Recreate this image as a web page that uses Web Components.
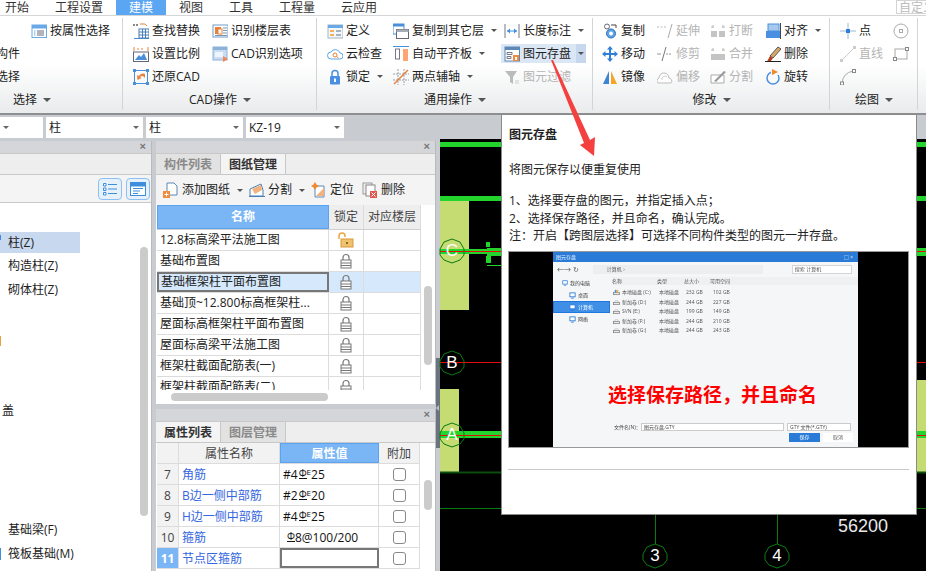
<!DOCTYPE html>
<html lang="zh-CN">
<head>
<meta charset="utf-8">
<title>图元存盘</title>
<style>
    html, body { margin: 0; padding: 0; background: #c8cbcf; }
    body {
        width: 926px; height: 571px; overflow: hidden;
        font: 12px/16px "Open Sans", "Noto Sans CJK SC", sans-serif; color: #222;
    }
</style>
</head>
<body>
<gl-app>
    <gl-tabs slot="top"></gl-tabs>
    <gl-ribbon slot="top">
        <rb-group label="选择" width="182" pad="55" cols="35px 85px">
            <rb-item></rb-item>
            <rb-item>构件</rb-item>
            <rb-item>选择</rb-item>
            <rb-item icon="attr">按属性选择</rb-item>
        </rb-group>
        <rb-group label="CAD操作" width="194" pad="10" cols="79px 100px">
            <rb-item icon="find">查找替换</rb-item>
            <rb-item icon="scale">设置比例</rb-item>
            <rb-item icon="restore">还原CAD</rb-item>
            <rb-item icon="floor">识别楼层表</rb-item>
            <rb-item icon="cadopt">CAD识别选项</rb-item>
        </rb-group>
        <rb-group label="通用操作" width="276" pad="10" cols="66px 111px 90px">
            <rb-item icon="define">定义</rb-item>
            <rb-item icon="cloud">云检查</rb-item>
            <rb-item icon="padlock" caret>锁定</rb-item>
            <rb-item icon="copyfloor" caret>复制到其它层</rb-item>
            <rb-item icon="align" caret>自动平齐板</rb-item>
            <rb-item icon="axis" caret>两点辅轴</rb-item>
            <rb-item icon="dim" caret>长度标注</rb-item>
            <rb-item icon="save" caret hot>图元存盘</rb-item>
            <rb-item icon="filter" disabled>图元过滤</rb-item>
        </rb-group>
        <rb-group label="修改" width="237" pad="9" cols="55px 53px 55px 60px">
            <rb-item icon="copy">复制</rb-item>
            <rb-item icon="move">移动</rb-item>
            <rb-item icon="mirror">镜像</rb-item>
            <rb-item icon="extend" disabled>延伸</rb-item>
            <rb-item icon="trim" disabled>修剪</rb-item>
            <rb-item icon="offset" disabled>偏移</rb-item>
            <rb-item icon="breakit" disabled>打断</rb-item>
            <rb-item icon="merge" disabled>合并</rb-item>
            <rb-item icon="split" disabled>分割</rb-item>
            <rb-item icon="snap" caret>对齐</rb-item>
            <rb-item icon="erase">删除</rb-item>
            <rb-item icon="rotate">旋转</rb-item>
        </rb-group>
        <rb-group label="绘图" width="88" pad="10" cols="53px 24px">
            <rb-item icon="point">点</rb-item>
            <rb-item icon="line" disabled>直线</rb-item>
            <rb-item icon="arc"></rb-item>
            <rb-item icon="circle"></rb-item>
            <rb-item icon="rect"></rb-item>
        </rb-group>
    </gl-ribbon>
    <gl-selectors slot="top"></gl-selectors>

    <gl-panel slot="left">
        <tree-tools slot="tools"></tree-tools>
        <tree-list></tree-list>
    </gl-panel>

    <gl-panel slot="mid-top" tabs="构件列表|图纸管理" active="1">
        <sheet-tools slot="tools"></sheet-tools>
        <sheet-table></sheet-table>
    </gl-panel>
    <gl-panel slot="mid-bottom" tabs="属性列表|图层管理" active="0">
        <prop-table></prop-table>
    </gl-panel>

    <cad-canvas slot="canvas"></cad-canvas>

    <tip-card slot="over" title="图元存盘">
        <file-dialog slot="shot"></file-dialog>
    </tip-card>
</gl-app>

<script>
const svgIcons = {
    attr: '<rect x="1" y="2" width="14.5" height="12.5" fill="#fff" stroke="#69a9e8"/><rect x="1" y="2" width="14.5" height="3.5" fill="#69a9e8"/><path d="M6 8h7M6 10h7M6 12h7" stroke="#667"/><path d="M3 8h1.5M3 10h1.5M3 12h1.5" stroke="#69a9e8"/>',
    find: '<path d="M0 2h2M3 2h2" stroke="#888" stroke-width="2"/><path d="M7 1h5l2 2" fill="none" stroke="#e8813a"/><path d="M1 15.500h15" stroke="#4a90d9"/><rect x="6" y="6" width="10" height="9" fill="#fff" stroke="#4a7fb5"/><path d="M6 9h10M6 12h10M9.500 6v9M12.500 6v9" stroke="#4a7fb5"/>',
    scale: '<path d="M1 1v4M15 1v4" stroke="#e8813a"/><path d="M4 3h8" stroke="#e8813a" stroke-dasharray="2 2"/><rect x=".5" y="6" width="15" height="9.500" fill="#fff" stroke="#667"/><path d="M2 14l4-5 2 2 3-4 3 7z" fill="#4a90d9"/>',
    restore: '<rect x="1.500" y="1.500" width="13" height="13" fill="none" stroke="#4a90d9"/><path d="M0 0h3v3H0zM13 0h3v3h-3zM0 13h3v3H0zM13 13h3v3h-3z" fill="#4a90d9"/><path d="M12 5a4.500 4.500 0 0 0-6 2l-2-1 .5 5 4-2-1.500-1a3 3 0 0 1 5 3" fill="#e8813a"/>',
    floor: '<rect x="1" y="2" width="15" height="12" fill="#fff" stroke="#6e9cc9"/><rect x="3" y="4" width="6" height="7" fill="#e8813a"/><rect x="6" y="6" width="4" height="5" fill="#fff" stroke="#e8813a"/><path d="M11 5h4M11 7.500h4M11 10h4M3 12.500h12" stroke="#7a94b0"/>',
    cadopt: '<rect x="1" y="1" width="14" height="13" fill="#c9dcf2" stroke="#8cb2dc"/><rect x="1" y="1" width="14" height="3" fill="#8cb2dc"/><path d="M11 10l5 3-5 3z" fill="#ee8850"/><rect x="3" y="6" width="8" height="5" fill="#eef5fc"/>',
    define: '<rect x="1" y="2" width="15" height="13" fill="#f5f8fb" stroke="#a5b2bf"/><rect x="1" y="2" width="15" height="3" fill="#69a9e8"/><path d="M3 7h4v2H3zM3 11h4v2H3z" fill="#f0b15a"/><path d="M9 8h5M9 12h5" stroke="#a5b2bf" stroke-width="2"/>',
    cloud: '<path d="M4 13a3.500 3.500 0 0 1 0-7 5 5 0 0 1 9 1 3 3 0 0 1 0 6z" fill="#fff" stroke="#5ba6ea"/><circle cx="8" cy="9" r="2" fill="none" stroke="#e8813a"/><path d="M9.500 10.500l2 1.500" stroke="#e8813a"/>',
    padlock: '<path d="M5 7V4.500a3 3 0 0 1 6 0V7" fill="none" stroke="#4a90e2" stroke-width="1.500"/><rect x="3" y="7" width="10" height="8.500" rx="1" fill="#4a90e2"/><rect x="7" y="9.500" width="2" height="3.500" fill="#fff"/>',
    copyfloor: '<rect x="0" y="1" width="11" height="10" fill="#fff" stroke="#4a90d9"/><rect x="0" y="1" width="11" height="2.500" fill="#4a90d9"/><rect x="3.500" y="6.500" width="12" height="9" fill="#fff" stroke="#667"/><rect x="3.500" y="6.500" width="12" height="2.500" fill="#a6aeb6"/>',
    align: '<path d="M0 .5h16" stroke="#4a90d9"/><rect x="2.500" y="3" width="4" height="10" fill="#fff" stroke="#778"/><rect x="10" y="3" width="5" height="12" fill="#ffa472"/>',
    axis: '<path d="M0 5h16M0 11h16M5 0v16M11 0v16" stroke="#9aa0a8" stroke-dasharray="2 1"/><path d="M1 15L15 1" stroke="#e8813a" stroke-width="1.500"/>',
    dim: '<path d="M1 1v14M15 1v14" stroke="#778"/><path d="M3 8h10" stroke="#3d8fdc"/><path d="M3 8l3-2.500v5zM13 8l-3-2.500v5z" fill="#3d8fdc"/>',
    save: '<rect x="1" y="1" width="14.500" height="14" fill="#fff" stroke="#5c88b5"/><rect x="1" y="1" width="14.500" height="3" fill="#5c88b5"/><path d="M3 6.500h5v2H3zM3 10.500h4v2H3z" fill="none" stroke="#778"/><rect x="9" y="9" width="6" height="6" fill="#f08a3c"/><rect x="11" y="11" width="2" height="3" fill="#fff"/>',
    filter: '<path d="M1 2h12L9 8v7l-3-2V8z" fill="#bbb"/><path d="M11 12h4M11 14h4" stroke="#ccc"/>',
    copy: '<circle cx="5" cy="3.500" r="2.500" fill="none" stroke="#667"/><circle cx="9" cy="10.500" r="4.500" fill="#5ba6ea" stroke="#2f6eb5"/><circle cx="9" cy="10.500" r="2" fill="#fff"/><path d="M9 2h5v3" fill="none" stroke="#444"/>',
    move: '<path d="M8 0l3 3.500H9v3.500h3.500V5L16 8l-3.500 3V9H9v3.500h2L8 16l-3-3.500h2V9H3.500v2L0 8l3.500-3v2H7V3.500H5z" fill="#2f7fd6"/>',
    mirror: '<path d="M7 2v13H1z" fill="#3d85d4"/><path d="M9 2v13h6z" fill="#f5a623"/>',
    extend: '<path d="M0 4h2M3.500 4h2M7 4h2" stroke="#bbb"/><path d="M11 15L15 1" stroke="#aaa"/>',
    trim: '<path d="M0 8h4M9 8h2M12 8h2" stroke="#999"/><path d="M5 15L9 1" stroke="#777"/>',
    offset: '<path d="M1 14a3 3 0 0 1 1-5 5 5 0 0 1 10 0 3 3 0 0 1 2 5z" fill="#fff" stroke="#bbb"/><path d="M5 11a3 3 0 0 1 5-3" fill="none" stroke="#ccc"/>',
    breakit: '<path d="M1 8h6v6H1zM9 8h6v6H9z" fill="#c4c4c4"/><path d="M3 2v3M13 2v3M1 4h3M12 4h3" stroke="#bbb"/>',
    merge: '<path d="M1 8h14v6H1z" fill="#c4c4c4"/><path d="M3 2v3M13 2v3M1 4h3M12 4h3" stroke="#bbb"/>',
    split: '<path d="M1 6h13v8H1z" fill="#fff" stroke="#aaa"/><path d="M4 12L14 2l2 1-10 10z" fill="#999"/>',
    snap: '<rect x="3" y="1" width="11" height="7" fill="#a7c9ef" stroke="#4a90d9"/><rect x="1" y="8" width="14" height="7" fill="#4a90e2"/><path d="M15.500 0v16" stroke="#444"/>',
    erase: '<path d="M13 1l3 2-8 9-3-2z" fill="#d9a866" stroke="#555"/><path d="M5 10l3 2-2 3-4 .5z" fill="#b5421f"/><path d="M0 15.500h16" stroke="#222"/>',
    rotate: '<circle cx="8" cy="9" r="6" fill="none" stroke="#4a90e2" stroke-width="1.500"/><rect x="6" y="0" width="8" height="6" fill="#f5f8fa"/><path d="M7 0v6l6-3z" fill="#f0882c"/>',
    point: '<path d="M0 8h16M8 0v16" stroke="#9ab7d6"/><rect x="6" y="6" width="4" height="4" fill="#2f7fd6"/>',
    line: '<path d="M2 14L14 2" stroke="#ccc"/><rect x="0" y="13" width="3" height="3" fill="#ccc"/><rect x="13" y="0" width="3" height="3" fill="#ccc"/>',
    arc: '<path d="M2 14Q3 4 13 2" fill="none" stroke="#aaa"/><rect x=".5" y="13" width="3" height="3" fill="#fff" stroke="#888"/><rect x="12.500" y=".5" width="3" height="3" fill="#fff" stroke="#888"/>',
    circle: '<circle cx="8" cy="8" r="7" fill="none" stroke="#aaa"/><rect x="6.500" y="6.500" width="3" height="3" fill="#fff" stroke="#aaa"/>',
    rect: '<rect x="2" y="3" width="12" height="10" fill="none" stroke="#aaa"/><rect x=".5" y="11.500" width="3" height="3" fill="#fff" stroke="#888"/><rect x="12.500" y="1.500" width="3" height="3" fill="#fff" stroke="#888"/>',
    addsheet: '<path d="M4 1h7l3 3v9H4z" fill="#fff" stroke="#5c88b5"/><rect x="0" y="9" width="7" height="7" fill="#f08a3c"/><path d="M3.500 10.500v4M1.500 12.500h4" stroke="#fff"/>',
    cut: '<path d="M1 7l11-5 2 6v6H1z" fill="#fff" stroke="#4a7fb5"/><path d="M3 7l9-4 1 5-7 4z" fill="#f3b27d"/><path d="M0 14.500h16" stroke="#4a7fb5"/>',
    locate: '<path d="M4 4h9v11H4z" fill="#fff" stroke="#5c88b5"/><path d="M5 14l8-8v8z" fill="#f3b27d"/><path d="M4 0l1.500 2.500L8 4 5.500 5.500 4 8 2.500 5.500 0 4l2.500-1.500z" fill="#f0882c"/>',
    delsheet: '<rect x="1" y="1" width="9" height="11" fill="#eee" stroke="#999"/><rect x="4" y="3" width="9" height="11" fill="#fff" stroke="#888"/><rect x="8" y="9" width="7" height="7" fill="#e2554c"/><path d="M9.500 10.500l4 4M13.500 10.500l-4 4" stroke="#fff"/>',
    pc: '<rect x="2" y="2" width="12" height="9" fill="#fff" stroke="#2a7bd8" stroke-width="2"/><path d="M5 14h6" stroke="#2a7bd8" stroke-width="2"/>',
    disk: '<rect x="1" y="8" width="14" height="5" fill="#e8e8e8" stroke="#777" stroke-width="1.500"/><path d="M3 8l2-4h6l2 4" fill="none" stroke="#999"/>',
    sys: '<rect x="1" y="8" width="14" height="5" fill="#e8e8e8" stroke="#777" stroke-width="1.500"/><path d="M4 2h4v6H4z" fill="#3d8fdc"/><path d="M8 2h4v6H8z" fill="#e8b23c"/>'
};

function svgIcon(name, size = 16) {
    return `<svg width="${size}" height="${size}" viewBox="0 0 16 16" style="display:block;flex:none">${svgIcons[name] || ''}</svg>`;
}

class GlApp extends HTMLElement {
    constructor() {
        super();
        this.attachShadow({ mode: 'open' });
    }
    connectedCallback() {
        this.shadowRoot.innerHTML = `
            <style>
                :host { display: flex; flex-direction: column; position: relative; width: 926px; height: 571px; overflow: hidden; }
                .main { flex: 1; min-height: 0; display: grid; grid-template-columns: 152px 280px 1fr; column-gap: 4px; }
                .left { display: flex; min-height: 0; padding-top: 2px; }
                .mid { display: flex; flex-direction: column; gap: 5px; min-height: 0; padding-top: 2px; }
                .left ::slotted(*) { flex: 1; }
                ::slotted([slot=mid-top]) { height: 263px; flex: none; }
                ::slotted([slot=mid-bottom]) { flex: 1; }
            </style>
            <slot name="top"></slot>
            <div class="main">
                <div class="left"><slot name="left"></slot></div>
                <div class="mid"><slot name="mid-top"></slot><slot name="mid-bottom"></slot></div>
                <slot name="canvas"></slot>
            </div>
            <slot name="over"></slot>
            <svg width="926" height="571" style="position:absolute;left:0;top:0;pointer-events:none">
                <path d="M551 60L584 143L580 145L594 156L595 137L590 140L553 60Z" fill="#f4403f"/>
            </svg>`;
    }
}

class GlTabs extends HTMLElement {
    constructor() {
        super();
        this.attachShadow({ mode: 'open' });
    }
    connectedCallback() {
        const tabs = ['开始', '工程设置', '建模', '视图', '工具', '工程量', '云应用'];
        this.shadowRoot.innerHTML = `
            <style>
                :host { display: flex; height: 16px; background: #fff; border-bottom: 1px solid #d4d6d8; box-sizing: border-box; overflow: hidden; line-height: 15px; }
                span { padding: 0 13px; color: #333; flex: none; }
                span:first-of-type { margin-left: -8px; }
                .on { background: #5ba6f2; color: #fff; }
                .custom { margin-left: auto; margin-right: -6px; flex: none; width: 36px; padding: 0 0 0 2px; box-sizing: border-box; height: 14px; border: 1px solid #d4d4d4; color: #bbb; overflow: hidden; white-space: nowrap; line-height: 13px; }
            </style>
            ${tabs.map(t => `<span class="${t === '建模' ? 'on' : ''}">${t}</span>`).join('')}
            <div class="custom">自定义</div>`;
    }
}

class GlRibbon extends HTMLElement {
    constructor() {
        super();
        this.attachShadow({ mode: 'open' });
    }
    connectedCallback() {
        this.shadowRoot.innerHTML = `
            <style>
                :host { display: flex; height: 97px; overflow: hidden; background: linear-gradient(#fff 0, #fff 50%, #e9ebec 100%); }
            </style>
            <slot></slot>`;
    }
}

class RbGroup extends HTMLElement {
    constructor() {
        super();
        this.attachShadow({ mode: 'open' });
    }
    connectedCallback() {
        const width = this.getAttribute('width');
        const pad = this.getAttribute('pad');
        const cols = this.getAttribute('cols');
        const first = this.getAttribute('label') === '选择';
        this.shadowRoot.innerHTML = `
            <style>
                :host { display: flex; flex-direction: column; flex: none; box-sizing: border-box; width: ${width}px; padding: 3px 0 0 ${pad}px; position: relative; ${first ? 'margin-left:-59px;' : ''} }
                :host::after { content: ''; position: absolute; right: 0; top: 2px; bottom: 3px; width: 1px; background: #d2d5d7; }
                .grid { display: grid; grid-auto-flow: column; grid-template-rows: repeat(3, 23px); grid-template-columns: ${cols}; height: 69px; }
                .label { height: 20px; margin: 2px 0 0 -${pad}px; display: flex; justify-content: center; align-items: center; gap: 6px; color: #222; }
                .label i { width: 0; height: 0; border: 4px solid transparent; border-top-color: #555; border-bottom: 0; }
            </style>
            <div class="grid"><slot></slot></div>
            <div class="label">${this.getAttribute('label')}<i></i></div>`;
    }
}

class RbItem extends HTMLElement {
    constructor() {
        super();
        this.attachShadow({ mode: 'open' });
    }
    connectedCallback() {
        const icon = this.getAttribute('icon');
        const hot = this.hasAttribute('hot');
        const off = this.hasAttribute('disabled');
        this.shadowRoot.innerHTML = `
            <style>
                :host { display: flex; align-items: center; gap: 3px; height: ${hot ? '19px' : '23px'}; white-space: nowrap; color: ${off ? '#b4b4b4' : '#222'}; ${hot ? 'align-self:center;margin-left:-3px;padding-left:3px;width:82px;background:#dce7f6;' : ''} }
                .caret { ${hot ? 'margin-left:2px;width:12px;height:19px;background:#c6d7ee;' : 'margin-left:4px;width:6px;'} display: flex; align-items: center; justify-content: center; }
                .caret i { width: 0; height: 0; border: 3px solid transparent; border-top: 3px solid #555; border-bottom: 0; }
            </style>
            ${icon ? svgIcon(icon) : ''}<slot></slot>
            ${this.hasAttribute('caret') ? '<span class="caret"><i></i></span>' : ''}`;
    }
}

class GlSelectors extends HTMLElement {
    constructor() {
        super();
        this.attachShadow({ mode: 'open' });
    }
    connectedCallback() {
        const boxes = [['', 43], ['柱', 97], ['柱', 97], ['KZ-19', 98]];
        this.shadowRoot.innerHTML = `
            <style>
                :host { display: flex; gap: 3px; height: 26px; box-sizing: border-box; border-top: 2px solid #8d8f91; padding: 2px 0 1px; background: #c8cbcf; }
                div { background: #fff; box-sizing: border-box; padding-left: 3px; line-height: 21px; height: 21px; display: flex; justify-content: space-between; align-items: center; padding-right: 4px; }
                i { width: 0; height: 0; border: 3px solid transparent; border-top: 3px solid #666; border-bottom: 0; }
            </style>
            ${boxes.map(b => `<div style="width:${b[1]}px">${b[0]}<i></i></div>`).join('')}`;
    }
}

class GlPanel extends HTMLElement {
    constructor() {
        super();
        this.attachShadow({ mode: 'open' });
    }
    connectedCallback() {
        const tabs = (this.getAttribute('tabs') || '').split('|').filter(Boolean);
        const active = Number(this.getAttribute('active'));
        this.shadowRoot.innerHTML = `
            <style>
                :host { display: flex; flex-direction: column; min-height: 0; background: #fff; overflow: hidden; position: relative; border-right: 1px solid #b8babd; box-sizing: border-box; }
                .bar { height: 12px; flex: none; background: #d4d6da; color: #777; font: bold 11px/11px "Liberation Sans", sans-serif; text-align: right; padding-right: 5px; }
                .tabs { height: 22px; flex: none; display: flex; background: #eeeeee; border-top: 1px solid #c8c8c8; border-bottom: 1px solid #c8c8c8; box-sizing: border-box; }
                .tabs span { width: 65px; text-align: center; font-weight: bold; line-height: 21px; color: #8a8a8a; background: #e2e2e2; border-right: 1px solid #c8c8c8; box-sizing: border-box; }
                .tabs span.on { color: #333; background: #f4f4f4; }
                .body { flex: 1; min-height: 0; position: relative; display: flex; flex-direction: column; }
            </style>
            <div class="bar">×</div>
            <div class="tabs">${tabs.map((t, i) => `<span class="${i === active ? 'on' : ''}">${t}</span>`).join('')}</div>
            <slot name="tools"></slot>
            <div class="body"><slot></slot></div>`;
    }
}

class TreeTools extends HTMLElement {
    constructor() {
        super();
        this.attachShadow({ mode: 'open' });
    }
    connectedCallback() {
        this.shadowRoot.innerHTML = `
            <style>
                :host { display: flex; justify-content: flex-end; align-items: center; gap: 4px; height: 28px; padding-right: 1px; background: #f4f4f4; border-bottom: 1px solid #c8c8c8; box-sizing: border-box; }
                b { width: 24px; height: 22px; box-sizing: border-box; border: 1px solid #8cc0f2; border-radius: 4px; background: #e6f1fc; display: flex; align-items: center; justify-content: center; }
            </style>
            <b><svg width="14" height="14" viewBox="0 0 14 14"><path d="M5 2.500h9M5 7h9M5 11.500h9" stroke="#3d8fdc"/><path d="M.5 1.500h2.500v2.500H.5zM.5 6h2.500v2.500H.5zM.5 10.500h2.500v2.500H.5z" fill="#fff" stroke="#3d8fdc"/></svg></b>
            <b><svg width="16" height="14" viewBox="0 0 16 14"><rect x=".5" y=".5" width="15" height="13" fill="#fff" stroke="#3d8fdc"/><rect x=".5" y=".5" width="15" height="4" fill="#3d8fdc"/><path d="M3 6.500h10M3 9h7M3 11.500h5" stroke="#3d8fdc"/></svg></b>`;
    }
}

class TreeList extends HTMLElement {
    constructor() {
        super();
        this.attachShadow({ mode: 'open' });
    }
    connectedCallback() {
        const rows = ['柱(Z)', '构造柱(Z)', '砌体柱(Z)', '', '', '', '', '', '', '', '', '', '基础梁(F)', '筏板基础(M)'];
        this.shadowRoot.innerHTML = `
            <style>
                :host { display: block; flex: 1; padding-top: 27px; overflow: hidden; position: relative; }
                div { height: 24px; padding-left: 8px; line-height: 24px; box-sizing: border-box; white-space: nowrap; }
                .sel { width: 80px; height: 21px; line-height: 21px; margin: 2px 0 1px; background: #c7d8ef; }
                .stub { position: absolute; left: 0; width: 14px; height: 24px; padding: 0; overflow: hidden; direction: rtl; }
                .scroll { position: absolute; left: 140px; top: 44px; width: 8px; height: 269px; padding: 0; background: #cbcbcb; border-radius: 4px; }
                .mark { position: absolute; left: 0; width: 1px; padding: 0; }
            </style>
            ${rows.map((r, i) => `<div class="${i === 0 ? 'sel' : ''}">${r}</div>`).join('')}
            <div class="stub" style="top:196px">盖</div>
            <div class="mark" style="top:32px;height:5px;background:#3d8fdc"></div>
            <div class="mark" style="top:133px;height:10px;background:#e8a33c"></div>
            <div class="mark" style="top:345px;height:12px;background:#3d8fdc"></div>
            <div class="scroll"></div>`;
    }
}

class SheetTools extends HTMLElement {
    constructor() {
        super();
        this.attachShadow({ mode: 'open' });
    }
    connectedCallback() {
        this.shadowRoot.innerHTML = `
            <style>
                :host { display: flex; align-items: center; gap: 6px; height: 30px; padding-left: 7px; background: #f4f4f4; flex: none; }
                rb-item:last-child { margin-left: 2px; }
            </style>
            <rb-item icon="addsheet" caret>添加图纸</rb-item>
            <rb-item icon="cut" caret>分割</rb-item>
            <rb-item icon="locate">定位</rb-item>
            <rb-item icon="delsheet">删除</rb-item>`;
    }
}

const lockSvg = open => open
    ? '<svg width="16" height="16" viewBox="0 0 16 16"><path d="M1 7V4a3 3 0 0 1 6 0v1" fill="none" stroke="#e9a640" stroke-width="1.500"/><rect x="3" y="7" width="12" height="8" fill="#f0c26e" stroke="#d99a3a"/><rect x="8" y="10" width="2" height="2" fill="#8a6a2a"/></svg>'
    : '<svg width="16" height="16" viewBox="0 0 16 16"><path d="M5 7V4.500a3 3 0 0 1 6 0V7" fill="none" stroke="#777" stroke-width="1.200"/><rect x="3" y="7" width="10" height="8" fill="#fff" stroke="#777"/><path d="M3 10h10M3 12.500h10" stroke="#777"/></svg>';

class SheetTable extends HTMLElement {
    constructor() {
        super();
        this.attachShadow({ mode: 'open' });
    }
    connectedCallback() {
        const names = ['12.8标高梁平法施工图', '基础布置图', '基础框架柱平面布置图', '基础顶~12.800标高框架柱...', '屋面标高框架柱平面布置图', '屋面标高梁平法施工图', '框架柱截面配筋表(一)', '框架柱截面配筋表(二)'];
        this.shadowRoot.innerHTML = `
            <style>
                :host { display: flex; flex-direction: column; flex: 1; min-height: 0; position: relative; padding-left: 1px; }
                .clip { height: 185px; overflow: hidden; flex: none; }
                .row { display: grid; grid-template-columns: 172px 35px 57px; width: 264px; height: 21px; border-bottom: 1px solid #dcdcdc; box-sizing: border-box; }
                .row > div { border-right: 1px solid #dcdcdc; box-sizing: border-box; padding-left: 3px; line-height: 20px; white-space: nowrap; overflow: hidden; display: flex; align-items: center; }
                .row > .lock { justify-content: center; padding: 0; }
                .head { height: 25px; background: #eeeeee; border-bottom: 1px solid #cfcfcf; }
                .head > div { padding: 0; justify-content: center; color: #444; line-height: 24px; }
                .head > .blue { background: #7ab6f6; color: #fff; font-weight: bold; border: 1px solid #5ba3ee; }
                .cur { background: #d5e8fc; }
                .cur > .name { border: 2px solid #777; padding-left: 2px; }
                .hbar { position: absolute; left: 15px; top: 188px; width: 157px; height: 8px; background: #cbcbcb; border-radius: 4px; }
                .vbar { position: absolute; left: 268px; top: 81px; width: 8px; height: 79px; background: #cbcbcb; border-radius: 4px; }
            </style>
            <div class="clip">
                <div class="row head"><div class="blue">名称</div><div>锁定</div><div>对应楼层</div></div>
                ${names.map((n, i) => `<div class="row ${i === 2 ? 'cur' : ''}"><div class="name">${n}</div><div class="lock">${lockSvg(i === 0)}</div><div></div></div>`).join('')}
            </div>
            <div class="hbar"></div>
            <div class="vbar"></div>`;
    }
}

class PropTable extends HTMLElement {
    constructor() {
        super();
        this.attachShadow({ mode: 'open' });
    }
    connectedCallback() {
        const bar = (n, d) => `#${n}<span class="bar">Φ</span><sup>E</sup>${d}`;
        const rows = [
            [7, '角筋', bar(4, 25)],
            [8, 'B边一侧中部筋', bar(2, 20)],
            [9, 'H边一侧中部筋', bar(4, 25)],
            [10, '箍筋', '<span class="stir"><span class="bar">Φ</span>8@100/200</span>'],
            [11, '节点区箍筋', '']
        ];
        this.shadowRoot.innerHTML = `
            <style>
                :host { display: block; flex: 1; position: relative; padding-left: 1px; overflow: hidden; }
                .row { display: grid; grid-template-columns: 22px 101px 99px 41px; width: 263px; height: 21px; border-bottom: 1px solid #dcdcdc; box-sizing: border-box; }
                .row > div { border-right: 1px solid #dcdcdc; box-sizing: border-box; white-space: nowrap; display: flex; align-items: center; overflow: hidden; padding-top: 2px; }
                .head { height: 21px; background: #f2f2f2; }
                .head > div { justify-content: center; color: #444; }
                .head > .blue { background: #7ab6f6; color: #fff; font-weight: bold; border: 1px solid #5ba3ee; }
                .idx { justify-content: center; background: #f2f2f2; color: #444; }
                .idx.on { background: #7ab6f6; color: #fff; font-weight: bold; }
                .name { padding-left: 3px; color: #3366e0; }
                .val { padding-left: 3px; color: #111; }
                .val.edit { border: 2px solid #777; }
                .bar { font-size: 10px; line-height: 10px; margin: -4px 0 0 1px; border-bottom: 1px solid #111; height: 10px; display: inline-block; }
                sup { font-size: 8px; line-height: 8px; margin-top: -6px; }
                .stir { padding-left: 3px; display: flex; align-items: center; }
                .chk { justify-content: center; }
                .row > .chk { padding-top: 0; }
                .chk i { width: 13px; height: 13px; box-sizing: border-box; border: 1px solid #888; border-radius: 3px; background: #fff; }
                .vbar { position: absolute; left: 268px; top: 37px; width: 8px; height: 30px; background: #cbcbcb; border-radius: 4px; }
            </style>
            <div class="row head"><div></div><div>属性名称</div><div class="blue">属性值</div><div>附加</div></div>
            ${rows.map(r => `<div class="row"><div class="idx ${r[0] === 11 ? 'on' : ''}">${r[0]}</div><div class="name">${r[1]}</div><div class="val ${r[0] === 11 ? 'edit' : ''}">${r[2]}</div><div class="chk"><i></i></div></div>`).join('')}
            <div class="vbar"></div>`;
    }
}

class CadAxis extends HTMLElement {
    constructor() {
        super();
        this.attachShadow({ mode: 'open' });
    }
    connectedCallback() {
        const x = this.getAttribute('x');
        const y = this.getAttribute('y');
        this.shadowRoot.innerHTML = `
            <style>
                :host { position: absolute; left: ${x - 13}px; top: ${y - 13}px; width: 26px; height: 26px; display: flex; align-items: center; justify-content: center; color: #fff; font: 17px/26px "Liberation Sans", sans-serif; }
                svg { position: absolute; left: 0; top: 0; }
                span { position: relative; }
            </style>
            <svg width="26" height="26" viewBox="0 0 26 26"><path d="M13 1L21 4L25 11V17L21 22L13 25L5 22L1 17V11L5 4Z" fill="none" stroke="#0c7a12"/></svg>
            <span><slot></slot></span>`;
    }
}

class CadCanvas extends HTMLElement {
    constructor() {
        super();
        this.attachShadow({ mode: 'open' });
    }
    connectedCallback() {
        this.shadowRoot.innerHTML = `
            <style>
                :host { display: block; position: relative; background: #000; }
                svg.plan { position: absolute; left: -4px; top: 0; }
                .num { position: absolute; left: 398px; top: 376px; color: #e8e8e8; font: 18px/22px "Liberation Sans", sans-serif; }
            </style>
            <svg class="plan" width="490" height="432" viewBox="436 139 490 432">
                <rect x="440" y="142" width="486" height="5" fill="#22d42c"/>
                <rect x="440" y="196" width="486" height="5" fill="#22d42c"/>
                <rect x="440" y="201" width="29" height="109" fill="#c5dc72"/>
                <rect x="440" y="389" width="19" height="83" fill="#c5dc72"/>
                <rect x="917" y="380" width="9" height="92" fill="#c5dc72"/>
                <rect x="440" y="249" width="47" height="5" fill="#22d42c"/>
                <rect x="487" y="248" width="439" height="8" fill="#22d42c"/>
                <rect x="486" y="242" width="4" height="5" fill="#22d42c"/>
                <rect x="486" y="256" width="5" height="7" fill="#22d42c"/>
                <path d="M487 265.500h14" stroke="#22d42c"/>
                <path d="M440 251.500h486M440 362.500h486M440 435.500h486" stroke="#e60b0b"/>
                <rect x="440" y="431" width="486" height="4" fill="#22d42c"/>
                <rect x="440" y="436" width="486" height="2" fill="#22d42c"/>
                <path d="M440 472.500h486" stroke="#0b4d0e" stroke-width="2"/>
                <path d="M440 508.500h486" stroke="#0b7a10"/>
                <path d="M655.500 510v34M777.500 510v34" stroke="#0b7a10"/>
                <rect x="436" y="358" width="4" height="90" fill="#6a7480"/>
                <path d="M439 405l-3 3 3 3z" fill="#b8bec4"/>
            </svg>
            <cad-axis x="12" y="112">C</cad-axis>
            <cad-axis x="12" y="224">B</cad-axis>
            <cad-axis x="12" y="296">A</cad-axis>
            <cad-axis x="215" y="417">3</cad-axis>
            <cad-axis x="337" y="417">4</cad-axis>
            <div class="num">56200</div>`;
    }
}

class TipCard extends HTMLElement {
    constructor() {
        super();
        this.attachShadow({ mode: 'open' });
    }
    connectedCallback() {
        this.shadowRoot.innerHTML = `
            <style>
                :host { position: absolute; left: 501px; top: 114px; width: 416px; height: 401px; box-sizing: border-box; background: #fff; border: 1px solid #8a8a8a; padding: 11px 7px 0; display: flex; flex-direction: column; color: #222; }
                h4 { margin: 0; font-size: 12px; line-height: 18px; font-weight: bold; }
                p { margin: 17px 0 13px; line-height: 18px; }
                ol { margin: 0; padding: 0; list-style: none; line-height: 17.5px; }
                .shot { margin: 6.5px 0 0 -1px; width: 401px; height: 197px; box-sizing: border-box; border: 1px solid #999; background: #000; display: flex; flex: none; padding-left: 44px; }
                hr { margin: 21px 0 0 -1px; width: 401px; border: 0; border-top: 1px solid #c9c9c9; }
            </style>
            <h4>${this.getAttribute('title')}</h4>
            <p>将图元保存以便重复使用</p>
            <ol>
                <li>1、选择要存盘的图元，并指定插入点；</li>
                <li>2、选择保存路径，并且命名，确认完成。</li>
                <li>注：开启【跨图层选择】可选择不同构件类型的图元一并存盘。</li>
            </ol>
            <div class="shot"><slot name="shot"></slot></div>
            <hr>`;
    }
}

class FileDialog extends HTMLElement {
    constructor() {
        super();
        this.attachShadow({ mode: 'open' });
    }
    connectedCallback() {
        const drives = [
            ['sys', '本地磁盘 (C:)', '232 GB', '102 GB'],
            ['disk', '新加卷 (D:)', '244 GB', '227 GB'],
            ['disk', 'SVN (E:)', '199 GB', '149 GB'],
            ['disk', '新加卷 (F:)', '244 GB', '210 GB'],
            ['disk', '新加卷 (G:)', '244 GB', '243 GB']
        ];
        this.shadowRoot.innerHTML = `
            <style>
                :host { display: block; position: relative; width: 305px; height: 195px; font-size: 5px; line-height: 8px; color: #444; overflow: hidden; }
                .wrap { display: flex; flex-direction: column; height: 100%; background: #f5f6f7; filter: blur(.3px); }
                .title { height: 10px; flex: none; background: #2a7bd8; color: #e6effb; padding-left: 3px; line-height: 10px; display: flex; justify-content: space-between; padding-right: 5px; }
                .nav { height: 15px; flex: none; display: flex; align-items: center; gap: 3px; padding: 0 4px; font-size: 7px; color: #555; }
                .nav b { flex: none; width: 170px; margin-left: 11px; height: 9px; background: #eceef0; line-height: 9px; font-weight: normal; font-size: 5px; padding-left: 14px; box-sizing: border-box; }
                .nav em { flex: none; margin-left: 26px; width: 60px; height: 9px; background: #fff; border: 1px solid #d5d5d5; box-sizing: border-box; font-style: normal; font-size: 5px; line-height: 7px; padding-left: 2px; }
                .body { flex: 1; display: grid; grid-template-columns: 57px 1fr; min-height: 0; }
                .side div { height: 12px; box-sizing: border-box; display: flex; align-items: center; gap: 2px; padding-left: 16px; }
                .side div:first-child { padding-left: 9px; }
                .side .sel { background: #3f8fe6; color: #fff; border: 1px solid #1e78e0; padding-left: 15px; }
                .list { padding-left: 2px; }
                .grid { display: grid; grid-template-columns: 46px 27px 27px 40px; height: 9.5px; line-height: 9.500px; color: #555; padding-left: 1px; }
                .grid span:first-child { display: flex; align-items: center; gap: 2px; white-space: nowrap; }
                .hd { padding-left: 0; grid-template-columns: 45px 27px 26px 40px; height: 8px; line-height: 8px; margin-bottom: 3px; background: #eef0f2; }
                .foot { height: 24px; flex: none; padding-left: 61px; display: flex; flex-wrap: wrap; align-content: flex-start; column-gap: 3px; row-gap: 2px; }
                .foot u { text-decoration: none; width: 24px; white-space: nowrap; }
                .foot b { font-weight: normal; height: 8px; line-height: 7px; background: #fff; border: 1px solid #ccc; box-sizing: border-box; padding-left: 2px; white-space: nowrap; }
                .foot .btn { height: 9px; width: 31px; margin-left: 175px; background: #2a7bd8; color: #fff; text-align: center; padding: 0; border: 0; line-height: 9px; }
                .foot .btn + .btn { background: #fff; color: #555; margin-left: 0; width: 30px; }
                .red { position: absolute; left: 55px; top: 131px; width: 208px; white-space: nowrap; font-size: 19px; line-height: 24px; font-weight: bold; color: #f00; }
            </style>
            <div class="wrap">
                <div class="title"><span>图元存盘</span><span>□ ×</span></div>
                <div class="nav">←→ ↻<b>计算机 ›</b><em>搜索 计算机</em></div>
                <div class="body">
                    <div class="side"><div>${svgIcon('pc', 6)}我的电脑</div><div>${svgIcon('pc', 7)}桌面</div><div class="sel">${svgIcon('pc', 7)}计算机</div><div>${svgIcon('pc', 7)}网络</div></div>
                    <div class="list">
                        <div class="grid hd"><span>名称</span><span>类型</span><span>总大小</span><span>可用空间</span></div>
                        ${drives.map(d => `<div class="grid"><span>${svgIcon(d[0], 7)}${d[1]}</span><span>本地磁盘</span><span>${d[2]}</span><span>${d[3]}</span></div>`).join('')}
                    </div>
                </div>
                <div class="foot">
                    <u>文件名(N)：</u><b style="width:143px">图元存盘.GTY</b><b style="width:64px">GTY 文件(*.GTY)</b>
                    <b class="btn">保存</b><b class="btn">取消</b>
                </div>
            </div>
            <div class="red">选择保存路径，并且命名</div>`;
    }
}

customElements.define('gl-app', GlApp);
customElements.define('gl-tabs', GlTabs);
customElements.define('gl-ribbon', GlRibbon);
customElements.define('rb-group', RbGroup);
customElements.define('rb-item', RbItem);
customElements.define('gl-selectors', GlSelectors);
customElements.define('gl-panel', GlPanel);
customElements.define('tree-tools', TreeTools);
customElements.define('tree-list', TreeList);
customElements.define('sheet-tools', SheetTools);
customElements.define('sheet-table', SheetTable);
customElements.define('prop-table', PropTable);
customElements.define('cad-axis', CadAxis);
customElements.define('cad-canvas', CadCanvas);
customElements.define('tip-card', TipCard);
customElements.define('file-dialog', FileDialog);
</script>
</body>
</html>
